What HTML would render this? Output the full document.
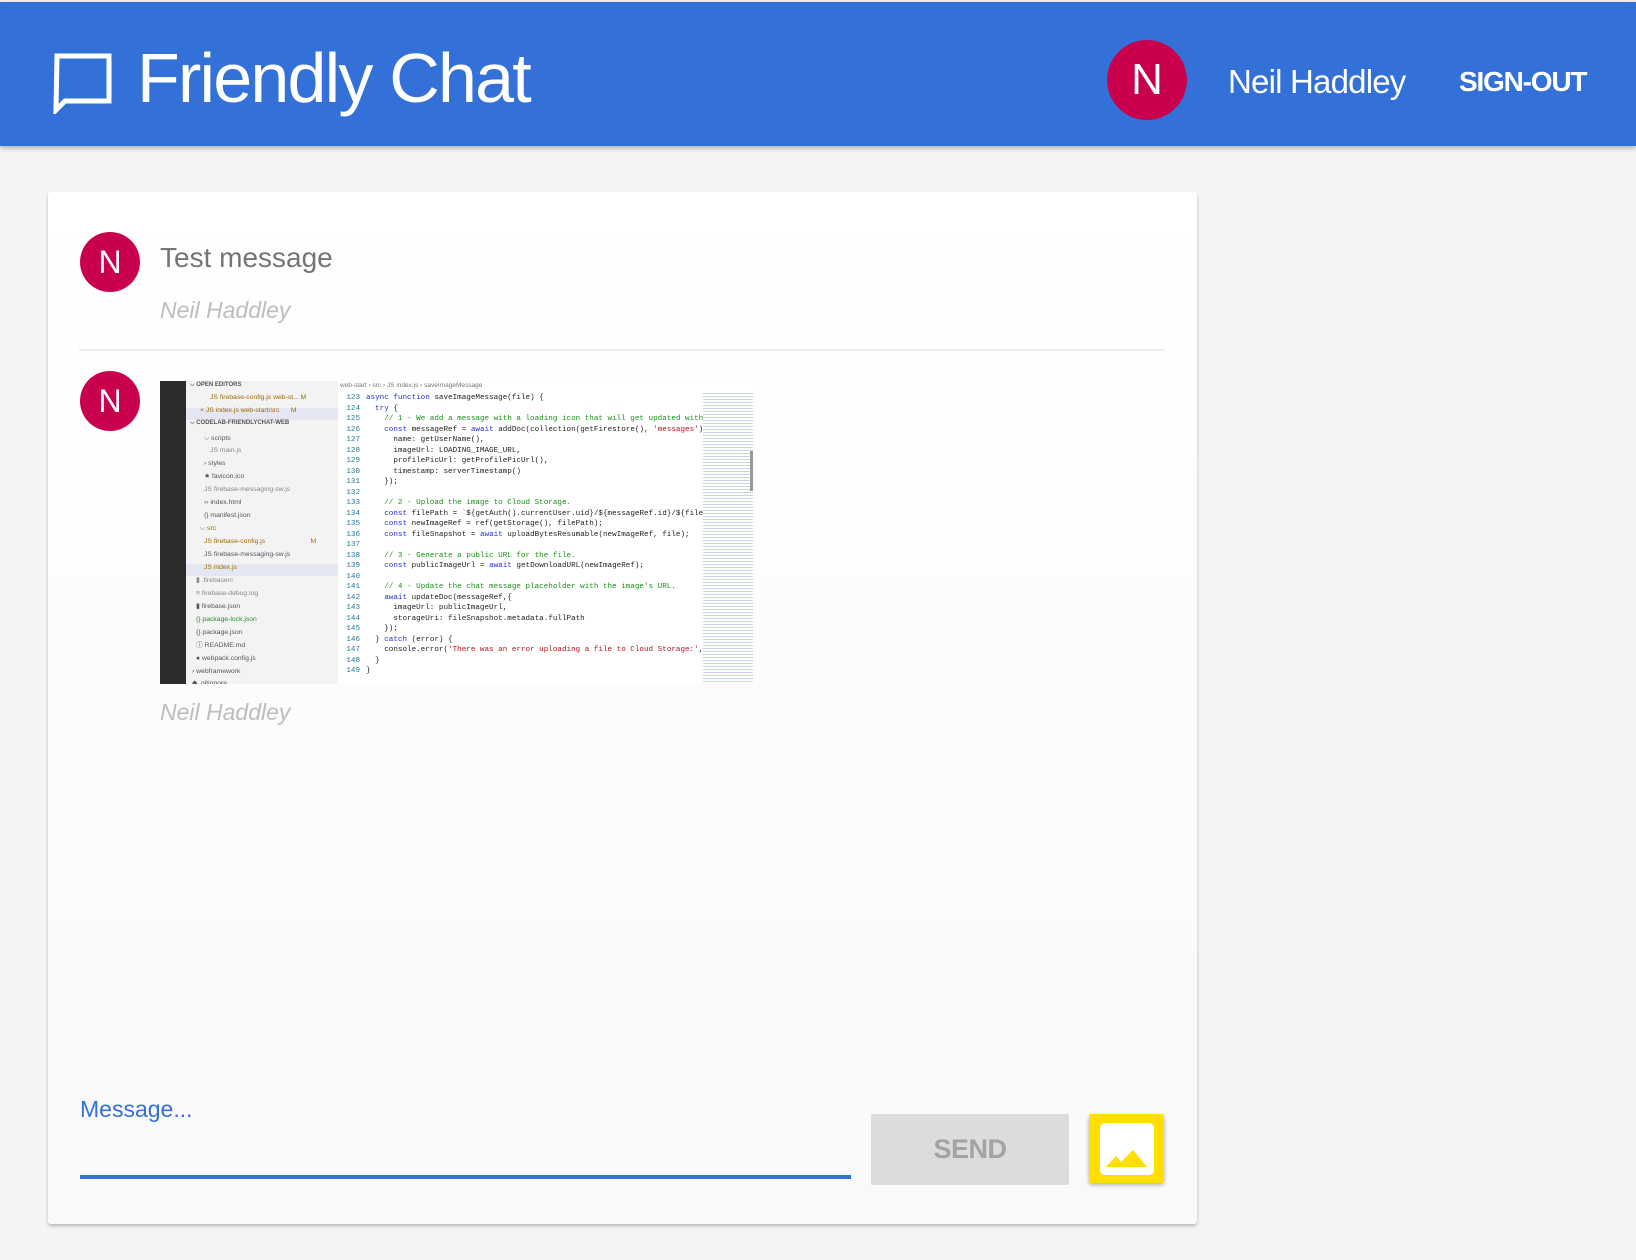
<!DOCTYPE html>
<html><head><meta charset="utf-8"><style>
*{margin:0;padding:0;box-sizing:border-box}
body{width:1636px;height:1260px;background:#f4f4f4;font-family:"Liberation Sans",sans-serif;position:relative;overflow:hidden}
.abs{position:absolute}
.hdr{left:0;top:2px;width:1636px;height:144px;background:#3370d8;box-shadow:0 2px 5px rgba(0,0,0,.3)}
.av{border-radius:50%;background:#c8004e;color:#fff;text-align:center}
.card{left:48px;top:192px;width:1149px;height:1032px;background:linear-gradient(#fff,#f9f9f9);border-radius:3px;box-shadow:0 2px 3px rgba(0,0,0,.25)}
.img{left:160px;top:381px;width:593px;height:303px;background:#fff;overflow:hidden;font-family:"Liberation Mono",monospace}
.ex div{position:absolute;left:0;font:6.8px "Liberation Sans",sans-serif;color:#555;white-space:nowrap;width:152px;height:12px;line-height:12px}
.cd div{position:absolute;left:0;font:7.6px "Liberation Mono",monospace;color:#222;white-space:pre;height:10px;line-height:10px}
.cd b{font-weight:normal;color:#2430d6}.cd i{font-style:normal;color:#1a8f1a}.cd u{text-decoration:none;color:#b4141e}
.ln{color:#237893;display:inline-block;width:22px;text-align:right;margin-right:6px}
</style></head><body>
<div class="abs hdr">
 <svg class="abs" style="left:52px;top:50px" width="62" height="62" viewBox="0 0 62 62"><path d="M5 4 H57 V49 H13 L4 58 Z" fill="none" stroke="#fff" stroke-width="5" stroke-linejoin="miter"/></svg>
 <div class="abs" style="left:137px;top:36px;font-size:70px;color:#fff;line-height:80px;letter-spacing:-1.8px">Friendly Chat</div>
 <div class="abs av" style="left:1107px;top:38px;width:80px;height:80px;font-size:44px;line-height:80px">N</div>
 <div class="abs" style="left:1228px;top:60px;font-size:33px;color:#fff;line-height:40px;letter-spacing:-0.8px">Neil Haddley</div>
 <div class="abs" style="left:1459px;top:63px;font-size:28px;font-weight:bold;color:#fff;line-height:34px;letter-spacing:-1.2px">SIGN-OUT</div>
</div>
<div class="abs card"></div>
<div class="abs av" style="left:80px;top:232px;width:60px;height:60px;font-size:32px;line-height:60px">N</div>
<div class="abs" style="left:160px;top:241px;font-size:28px;color:#757575;line-height:34px">Test message</div>
<div class="abs" style="left:160px;top:296px;font-size:23px;color:#bdbdbd;font-style:italic;line-height:28px">Neil Haddley</div>
<div class="abs" style="left:79px;top:349px;width:1086px;height:2px;background:#eee"></div>
<div class="abs av" style="left:80px;top:371px;width:60px;height:60px;font-size:32px;line-height:60px">N</div>
<div class="abs img">
 <div class="abs" style="left:0;top:0;width:26px;height:303px;background:#2c2c2c"></div>
 <div class="abs" style="left:26px;top:0;width:152px;height:303px;background:#f3f3f3"></div>
 <div class="abs" style="left:26px;top:27px;width:152px;height:12px;background:#e4e6f1"></div>
 <div class="abs" style="left:26px;top:183px;width:152px;height:12px;background:#e4e6f1"></div>
 <div class="abs ex" style="left:26px;top:0">
  <div style="top:-2px;left:4px;font-weight:bold;font-size:6px">⌵ OPEN EDITORS</div>
  <div style="top:11px;left:24px;color:#a06a00">JS firebase-config.js web-st... M</div>
  <div style="top:24px;left:14px;color:#a06a00">× JS index.js web-start/src &nbsp;&nbsp;&nbsp;&nbsp;&nbsp;M</div>
  <div style="top:36px;left:4px;font-weight:bold;font-size:6px">⌵ CODELAB-FRIENDLYCHAT-WEB</div>
  <div style="top:52px;left:18px">⌵ scripts</div>
  <div style="top:64px;left:24px;color:#888">JS main.js</div>
  <div style="top:77px;left:18px">› styles</div>
  <div style="top:90px;left:18px">★ favicon.ico</div>
  <div style="top:103px;left:18px;color:#888">JS firebase-messaging-sw.js</div>
  <div style="top:116px;left:18px">‹› index.html</div>
  <div style="top:129px;left:18px">{} manifest.json</div>
  <div style="top:142px;left:14px;color:#a06a00">⌵ src</div>
  <div style="top:155px;left:18px;color:#a06a00">JS firebase-config.js &nbsp;&nbsp;&nbsp;&nbsp;&nbsp;&nbsp;&nbsp;&nbsp;&nbsp;&nbsp;&nbsp;&nbsp;&nbsp;&nbsp;&nbsp;&nbsp;&nbsp;&nbsp;&nbsp;&nbsp;&nbsp;&nbsp;&nbsp;M</div>
  <div style="top:168px;left:18px">JS firebase-messaging-sw.js</div>
  <div style="top:181px;left:18px;color:#a06a00">JS index.js</div>
  <div style="top:194px;left:10px;color:#888">▮ .firebaserc</div>
  <div style="top:207px;left:10px;color:#888">≡ firebase-debug.log</div>
  <div style="top:220px;left:10px">▮ firebase.json</div>
  <div style="top:233px;left:10px;color:#2a8a2a">{} package-lock.json</div>
  <div style="top:246px;left:10px">{} package.json</div>
  <div style="top:259px;left:10px">ⓘ README.md</div>
  <div style="top:272px;left:10px">● webpack.config.js</div>
  <div style="top:285px;left:6px">› webframework</div>
  <div style="top:297px;left:6px">◆ .gitignore</div>
 </div>
 <div class="abs" style="left:180px;top:0;font:6.5px 'Liberation Sans',sans-serif;color:#777;line-height:9px">web-start › src › JS index.js › saveImageMessage</div>
 <div class="abs cd" style="left:178px;top:12px">
  <div style="top:0"><span class="ln">123</span><b>async function</b> saveImageMessage(file) {</div>
  <div style="top:10.5px"><span class="ln">124</span>  <b>try</b> {</div>
  <div style="top:21px"><span class="ln">125</span>    <i>// 1 - We add a message with a loading icon that will get updated with th</i></div>
  <div style="top:31.5px"><span class="ln">126</span>    <b>const</b> messageRef = <b>await</b> addDoc(collection(getFirestore(), <u>'messages'</u>), {</div>
  <div style="top:42px"><span class="ln">127</span>      name: getUserName(),</div>
  <div style="top:52.5px"><span class="ln">128</span>      imageUrl: LOADING_IMAGE_URL,</div>
  <div style="top:63px"><span class="ln">129</span>      profilePicUrl: getProfilePicUrl(),</div>
  <div style="top:73.5px"><span class="ln">130</span>      timestamp: serverTimestamp()</div>
  <div style="top:84px"><span class="ln">131</span>    });</div>
  <div style="top:94.5px"><span class="ln">132</span></div>
  <div style="top:105px"><span class="ln">133</span>    <i>// 2 - Upload the image to Cloud Storage.</i></div>
  <div style="top:115.5px"><span class="ln">134</span>    <b>const</b> filePath = `${getAuth().currentUser.uid}/${messageRef.id}/${file.na</div>
  <div style="top:126px"><span class="ln">135</span>    <b>const</b> newImageRef = ref(getStorage(), filePath);</div>
  <div style="top:136.5px"><span class="ln">136</span>    <b>const</b> fileSnapshot = <b>await</b> uploadBytesResumable(newImageRef, file);</div>
  <div style="top:147px"><span class="ln">137</span></div>
  <div style="top:157.5px"><span class="ln">138</span>    <i>// 3 - Generate a public URL for the file.</i></div>
  <div style="top:168px"><span class="ln">139</span>    <b>const</b> publicImageUrl = <b>await</b> getDownloadURL(newImageRef);</div>
  <div style="top:178.5px"><span class="ln">140</span></div>
  <div style="top:189px"><span class="ln">141</span>    <i>// 4 - Update the chat message placeholder with the image's URL.</i></div>
  <div style="top:199.5px"><span class="ln">142</span>    <b>await</b> updateDoc(messageRef,{</div>
  <div style="top:210px"><span class="ln">143</span>      imageUrl: publicImageUrl,</div>
  <div style="top:220.5px"><span class="ln">144</span>      storageUri: fileSnapshot.metadata.fullPath</div>
  <div style="top:231px"><span class="ln">145</span>    });</div>
  <div style="top:241.5px"><span class="ln">146</span>  } <b>catch</b> (error) {</div>
  <div style="top:252px"><span class="ln">147</span>    console.error(<u>'There was an error uploading a file to Cloud Storage:'</u>, er</div>
  <div style="top:262.5px"><span class="ln">148</span>  }</div>
  <div style="top:273px"><span class="ln">149</span>}</div>
 </div>
 <div class="abs" style="left:543px;top:10px;width:50px;height:293px;background:#fff;background-image:repeating-linear-gradient(#fff 0 2px,#c9dcc9 2px 3px,#fff 3px 5px,#cfd2ea 5px 6px);"></div>
 <div class="abs" style="left:590px;top:70px;width:3px;height:40px;background:#999"></div>
</div>
<div class="abs" style="left:160px;top:698px;font-size:23px;color:#bdbdbd;font-style:italic;line-height:28px">Neil Haddley</div>
<div class="abs" style="left:80px;top:1095px;font-size:23px;color:#3370d8;line-height:28px">Message...</div>
<div class="abs" style="left:80px;top:1175px;width:771px;height:4px;background:#3370d8"></div>
<div class="abs" style="left:871px;top:1114px;width:198px;height:71px;background:#dcdcdc;border-radius:2px;color:#a3a3a3;font-weight:bold;font-size:27px;text-align:center;line-height:71px;letter-spacing:-0.5px">SEND</div>
<div class="abs" style="left:1089px;top:1114px;width:75px;height:69px;background:#ffde00;border-radius:3px;box-shadow:0 2px 4px rgba(0,0,0,.3)"></div>
<svg class="abs" style="left:1100px;top:1123px" width="54" height="52" viewBox="0 0 54 52"><rect x="0" y="0" width="54" height="52" rx="5" fill="#fff"/><path d="M6 44 L16 33 L21 39 L33 27 L47 44 Z" fill="#ffde00"/></svg>
</body></html>
